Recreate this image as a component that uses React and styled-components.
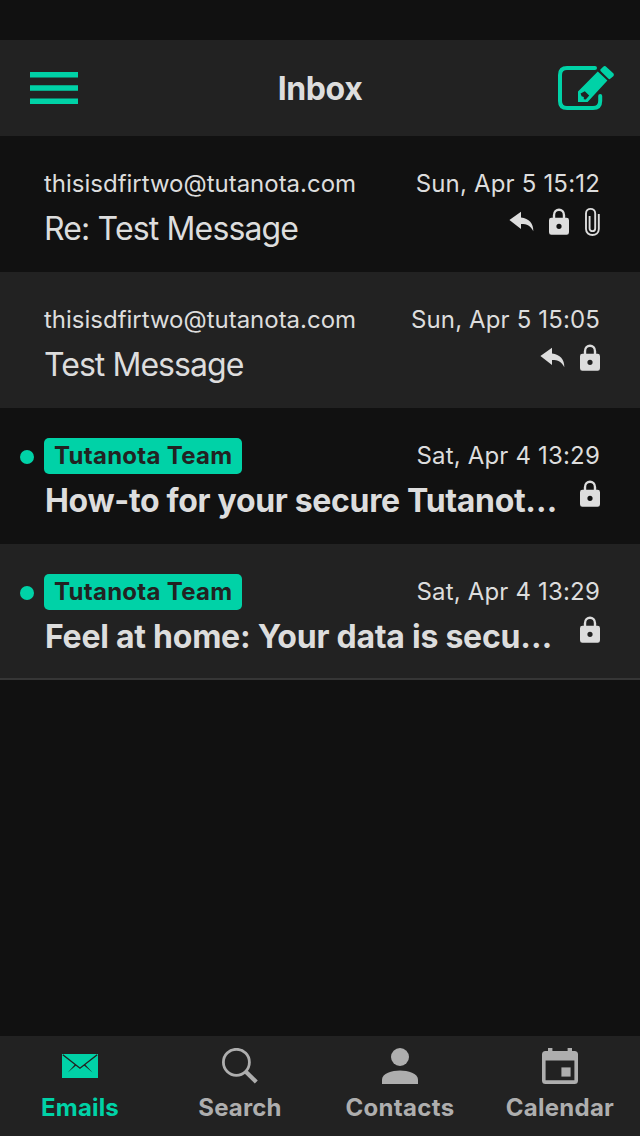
import React from "react";
import styled, { createGlobalStyle } from "styled-components";

const ACCENT = "#00d2a7";
const TEXT = "#dddddd";

const GlobalStyle = createGlobalStyle`
  * { box-sizing: border-box; }
  body {
    margin: 0;
    background: #111111;
    color: ${TEXT};
    font-family: Inter, "Liberation Sans", sans-serif;
  }
  svg { display: block; flex: none; }
`;

const Screen = styled.div`
  display: flex;
  flex-direction: column;
  width: 640px;
  height: 1136px;
  padding-top: 40px;
  background: #111111;
  overflow: hidden;
`;

const Header = styled.header`
  display: grid;
  grid-template-columns: 1fr auto 1fr;
  align-items: center;
  height: 96px;
  flex: none;
  padding: 0 26px 0 30px;
  background: #222222;
`;

const HeaderButton = styled.button`
  display: flex;
  padding: 0;
  border: 0;
  background: none;
  color: ${ACCENT};
  justify-self: ${(p) => p.$side};
`;

const Title = styled.h1`
  margin: 0 0 0 -4px;
  padding-top: 1px;
  font-size: 32px;
  line-height: 41px;
  font-weight: 700;
  letter-spacing: ${(p) => p.$spacing}px;
`;

const MailList = styled.main`
  flex: 1;
`;

const Mail = styled.article`
  height: 136px;
  padding: 30px 40px 0 20px;
  background: ${(p) => (p.$shaded ? "#222222" : "#111111")};
  &:last-child { border-bottom: 2px solid #363636; }
`;

const MetaLine = styled.div`
  display: flex;
  align-items: flex-start;
  height: 36px;
  font-size: 24px;
  line-height: 35px;
`;

const Marker = styled.span`
  width: 14px;
  height: 14px;
  margin: 12px 10px 0 0;
  border-radius: 50%;
  background: ${(p) => (p.$unread ? ACCENT : "transparent")};
`;

const Sender = styled.span`
  letter-spacing: ${(p) => p.$spacing}px;
  white-space: nowrap;
`;

const TeamBadge = styled(Sender)`
  width: 198px;
  height: 36px;
  padding-left: 10px;
  border-radius: 5px;
  background: ${ACCENT};
  color: #222222;
  font-weight: 700;
`;

const DateText = styled.time`
  margin-left: auto;
  letter-spacing: ${(p) => p.$spacing}px;
  white-space: nowrap;
`;

const SubjectLine = styled.div`
  display: flex;
  justify-content: space-between;
  padding-left: 24px;
`;

const Subject = styled.h2`
  margin: 0;
  padding: 6px 0 0 ${(p) => (p.$unread ? 1 : 0)}px;
  font-size: 32px;
  line-height: 41px;
  font-weight: ${(p) => (p.$unread ? 700 : 400)};
  letter-spacing: ${(p) => p.$spacing}px;
  white-space: nowrap;
`;

const StatusIcons = styled.div`
  display: flex;
  height: 30px;
  margin-top: 5px;
`;

const TabBar = styled.nav`
  display: grid;
  grid-template-columns: repeat(4, 1fr);
  height: 100px;
  flex: none;
  background: #222222;
`;

const Tab = styled.a`
  display: flex;
  flex-direction: column;
  align-items: center;
  padding-top: 12px;
  color: ${(p) => (p.$active ? ACCENT : "#aeaeae")};
`;

const TabLabel = styled.span`
  margin-top: 8px;
  font-size: 24px;
  line-height: 31px;
  font-weight: 700;
  letter-spacing: ${(p) => p.$spacing}px;
`;

const MenuIcon = () => (
  <svg width="48" height="32" fill="currentColor">
    <path d="M0 0H48V5.4H0ZM0 13.3H48V18.7H0ZM0 26.6H48V32H0Z" />
  </svg>
);

const ComposeIcon = () => (
  <svg width="56" height="44" viewBox="0 0 56 44" fill="currentColor">
    <path
      d="M37 2H9Q2 2 2 9V35Q2 42 9 42H35Q42.2 42 42.2 35V30"
      fill="none"
      stroke="currentColor"
      strokeWidth="4"
      strokeLinecap="round"
    />
    <path
      fillRule="evenodd"
      d="M20 25.4L39.8 5.6L49.4 14.4L29.6 36H20ZM22.6 27.4L23.6 30.2L25.8 31V33.3L27.8 33.6L31.2 29.6L26.8 25.2Z"
    />
    <path d="M42.4 3.4L45.2 .7Q46.8-.6 48.4 .9L55 7.1Q56.6 8.6 55.3 10.2L51.6 13.3Q50.8 13.2 50.2 12.5L42.8 5.2Q42 4.2 42.4 3.4Z" />
  </svg>
);

const ReplyIcon = () => (
  <svg width="25" height="30" viewBox="0 0 25 30" fill="currentColor">
    <path d="M12 4.8V10.4C20 11.2 24.6 16.4 24.3 24.3C21.5 18.8 18.2 17.1 12 17.1V21.9L.4 12.9Z" />
  </svg>
);

const LockIcon = () => (
  <svg width="20" height="30" viewBox="0 0 20 30" fill="currentColor">
    <path d="M5 12V8.2C5 1 15 1 15 8.2V12" fill="none" stroke="currentColor" strokeWidth="2.4" />
    <path
      fillRule="evenodd"
      d="M2.4 10.8H17.6Q20 10.8 20 13.2V25.3Q20 27.8 17.6 27.8H2.4Q0 27.8 0 25.3V13.2Q0 10.8 2.4 10.8ZM10 16.7A2.6 2.6 0 1 0 10 21.9A2.6 2.6 0 1 0 10 16.7Z"
    />
  </svg>
);

const ClipIcon = () => (
  <svg width="16" height="30" viewBox="0 0 16 30" fill="none" stroke="currentColor" strokeWidth="1.9">
    <path d="M14.8 7V22C14.8 30 2 30 2 22V6.4C2 .4 11.2 .4 11.2 6.4V21.4C11.2 25 5.6 25 5.6 21.4V9" />
  </svg>
);

const IconSlot = styled.span`
  margin-left: ${(p) => p.$gap}px;
`;

const ICONS = {
  reply: { Icon: ReplyIcon, gap: 0 },
  lock: { Icon: LockIcon, gap: 15 },
  clip: { Icon: ClipIcon, gap: 15 },
};

const EmailsIcon = () => (
  <svg width="36" height="36" viewBox="0 0 36 36">
    <path d="M0 6H36V30H0Z" fill="currentColor" />
    <path d="M.8 6.8L18 20.2L35.2 6.8" fill="none" stroke="#222" strokeWidth="1.4" />
    <path d="M13 16.2L14.3 17.2L5.8 24.4ZM23 16.2L21.7 17.2L30.5 24.4Z" fill="#222" />
  </svg>
);

const SearchIcon = () => (
  <svg width="36" height="36" viewBox="0 0 36 36" fill="none" stroke="currentColor">
    <circle cx="14.4" cy="14.3" r="13" strokeWidth="2.8" />
    <path d="M23.6 23.6L34.3 34" strokeWidth="4.2" />
  </svg>
);

const ContactsIcon = () => (
  <svg width="36" height="36" viewBox="0 0 36 36" fill="currentColor">
    <circle cx="18" cy="9" r="9" />
    <path d="M0 36V31.5C0 25.5 10 22.5 18 22.5S36 25.5 36 31.5V36Z" />
  </svg>
);

const CalendarIcon = () => (
  <svg width="36" height="36" viewBox="0 0 36 36" fill="currentColor">
    <path
      fillRule="evenodd"
      d="M6 0H10.4V3H25.6V0H30V3H32.5Q36 3 36 6.5V32.5Q36 36 32.5 36H3.5Q0 36 0 32.5V6.5Q0 3 3.5 3H6ZM3.6 12.4V32.2H32.4V12.4Z"
    />
    <path d="M19.4 19.4H28.6V28.6H19.4Z" />
  </svg>
);

const MAILS = [
  { sender: "thisisdfirtwo@tutanota.com", senderSpacing: -0.01, date: "Sun, Apr 5 15:12", dateSpacing: 0.18, subject: "Re: Test Message", subjectSpacing: -0.85, icons: ["reply", "lock", "clip"] },
  { sender: "thisisdfirtwo@tutanota.com", senderSpacing: -0.01, date: "Sun, Apr 5 15:05", dateSpacing: 0.14, subject: "Test Message", subjectSpacing: -0.95, icons: ["reply", "lock"] },
  { team: true, sender: "Tutanota Team", senderSpacing: 0.28, date: "Sat, Apr 4 13:29", dateSpacing: 0.18, subject: "How-to for your secure Tutanot…", subjectSpacing: -0.33, icons: ["lock"] },
  { team: true, sender: "Tutanota Team", senderSpacing: 0.28, date: "Sat, Apr 4 13:29", dateSpacing: 0.18, subject: "Feel at home: Your data is secu…", subjectSpacing: -0.25, icons: ["lock"] },
];

const TABS = [
  { label: "Emails", Icon: EmailsIcon, spacing: 0.15, active: true },
  { label: "Search", Icon: SearchIcon, spacing: 0.15 },
  { label: "Contacts", Icon: ContactsIcon, spacing: 0.33 },
  { label: "Calendar", Icon: CalendarIcon, spacing: 0.25 },
];

export default function App() {
  return (
    <Screen>
      <GlobalStyle />
      <Header>
        <HeaderButton $side="start" aria-label="Menu"><MenuIcon /></HeaderButton>
        <Title $spacing={-0.4}>Inbox</Title>
        <HeaderButton $side="end" aria-label="New email"><ComposeIcon /></HeaderButton>
      </Header>
      <MailList>
        {MAILS.map((mail, i) => {
          const Name = mail.team ? TeamBadge : Sender;
          return (
            <Mail key={i} $shaded={i % 2 === 1}>
              <MetaLine>
                <Marker $unread={mail.team} />
                <Name $spacing={mail.senderSpacing}>{mail.sender}</Name>
                <DateText $spacing={mail.dateSpacing}>{mail.date}</DateText>
              </MetaLine>
              <SubjectLine>
                <Subject $unread={mail.team} $spacing={mail.subjectSpacing}>{mail.subject}</Subject>
                <StatusIcons>
                  {mail.icons.map((name) => {
                    const { Icon, gap } = ICONS[name];
                    return <IconSlot key={name} $gap={gap}><Icon /></IconSlot>;
                  })}
                </StatusIcons>
              </SubjectLine>
            </Mail>
          );
        })}
      </MailList>
      <TabBar>
        {TABS.map(({ label, Icon, spacing, active }) => (
          <Tab key={label} $active={active}>
            <Icon />
            <TabLabel $spacing={spacing}>{label}</TabLabel>
          </Tab>
        ))}
      </TabBar>
    </Screen>
  );
}
